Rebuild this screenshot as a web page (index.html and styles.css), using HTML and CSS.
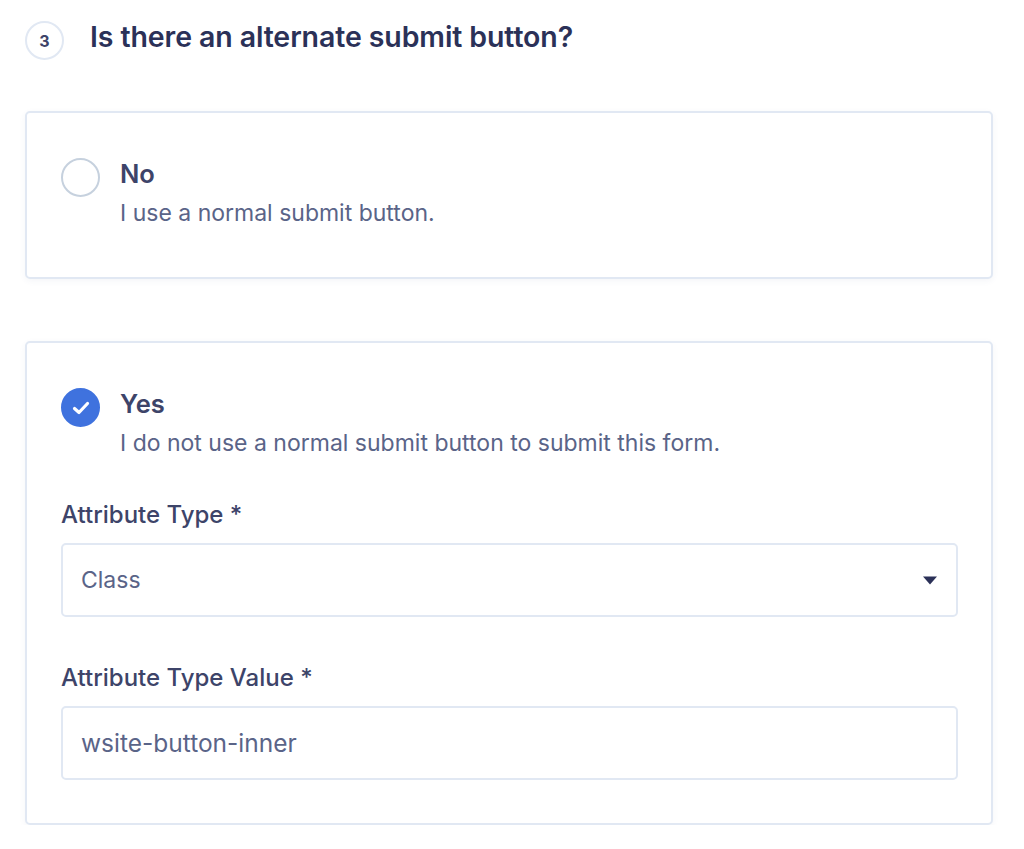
FILE: index.html
```html
<!DOCTYPE html>
<html lang="en">
<head>
    <meta charset="UTF-8">
    <meta name="viewport" content="width=device-width, initial-scale=1.0">
    <title>Alternate submit button</title>
    <link rel="stylesheet" href="styles.css">
</head>
<body>

    <div class="step-header">
        <div class="step-number">3</div>
        <h1>Is there an alternate submit button?</h1>
    </div>

    <div class="option-card card-no">
        <div class="option">
            <div class="radio"></div>
            <div class="option-text">
                <h2>No</h2>
                <p>I use a normal submit button.</p>
            </div>
        </div>
    </div>

    <div class="option-card card-yes">
        <div class="option">
            <div class="radio checked">
                <svg width="24" height="20" viewBox="0 0 24 20" fill="none">
                    <path d="M5.5 10.5 L10 14.5 L18.5 5.5" stroke="#fff" stroke-width="3.2" stroke-linecap="round" stroke-linejoin="round"/>
                </svg>
            </div>
            <div class="option-text">
                <h2>Yes</h2>
                <p>I do not use a normal submit button to submit this form.</p>
            </div>
        </div>

        <label class="field-label label-type">Attribute Type *</label>
        <div class="field select-field">
            <span>Class</span>
            <svg class="caret" width="16" height="9" viewBox="0 0 16 9">
                <path d="M1 0.5 H15 L8 8.5 Z" fill="#2b3158"/>
            </svg>
        </div>

        <label class="field-label label-value">Attribute Type Value *</label>
        <div class="field">
            <span class="field-value">wsite-button-inner</span>
        </div>
    </div>

</body>
</html>
```

FILE: styles.css
```css
body {
    font-family: Inter, "Liberation Sans", sans-serif;
    background: #ffffff;
    color: #3d4469;
    margin: 0;
    padding: 21px 31px 0 25px;
}
.step-header {
    display: flex;
    align-items: flex-start;
    height: 90px;
}
.step-number {
    width: 39px;
    height: 39px;
    box-sizing: border-box;
    border: 2px solid #e1e8f3;
    border-radius: 50%;
    display: flex;
    align-items: center;
    justify-content: center;
    font-size: 16px;
    font-weight: 700;
    color: #3d4469;
    flex-shrink: 0;
}
h1 {
    font-size: 28.5px;
    line-height: 32px;
    font-weight: 600;
    letter-spacing: -0.1px;
    color: #2b3158;
    margin: 0 0 0 26px;
}
.option-card {
    box-sizing: border-box;
    border: 2px solid #e1e8f3;
    border-radius: 5px;
    box-shadow: 0 2px 6px rgba(60, 80, 130, 0.06);
    padding: 45px 34px 0;
    background: #ffffff;
}
.card-no {
    height: 168px;
    margin-bottom: 62px;
}
.card-yes {
    height: 484px;
}
.option {
    display: flex;
    align-items: flex-start;
}
.radio {
    width: 39px;
    height: 39px;
    box-sizing: border-box;
    border: 2px solid #c6d1de;
    border-radius: 50%;
    margin-right: 20px;
    flex-shrink: 0;
    display: flex;
    align-items: center;
    justify-content: center;
}
.radio.checked {
    background: #3f72de;
    border-color: #3f72de;
}
.option-text h2 {
    font-size: 25.5px;
    line-height: 32px;
    font-weight: 600;
    color: #3d4469;
    margin: 0;
}
.option-text p {
    font-size: 23px;
    line-height: 30px;
    color: #5a6488;
    margin: 8px 0 0;
}
.field-label {
    display: block;
    font-size: 24px;
    line-height: 30px;
    font-weight: 500;
    color: #3d4469;
    margin-bottom: 13px;
}
.label-type {
    margin-top: 42px;
}
.label-value {
    margin-top: 46px;
}
.field {
    box-sizing: border-box;
    height: 74px;
    width: 897px;
    border: 2px solid #e1e8f3;
    border-radius: 5px;
    padding: 0 18px;
    display: flex;
    align-items: center;
    justify-content: space-between;
    font-size: 23px;
    color: #5a6488;
}
.field-value {
    font-size: 24.5px;
}
.caret {
    margin-right: 0;
}
```
